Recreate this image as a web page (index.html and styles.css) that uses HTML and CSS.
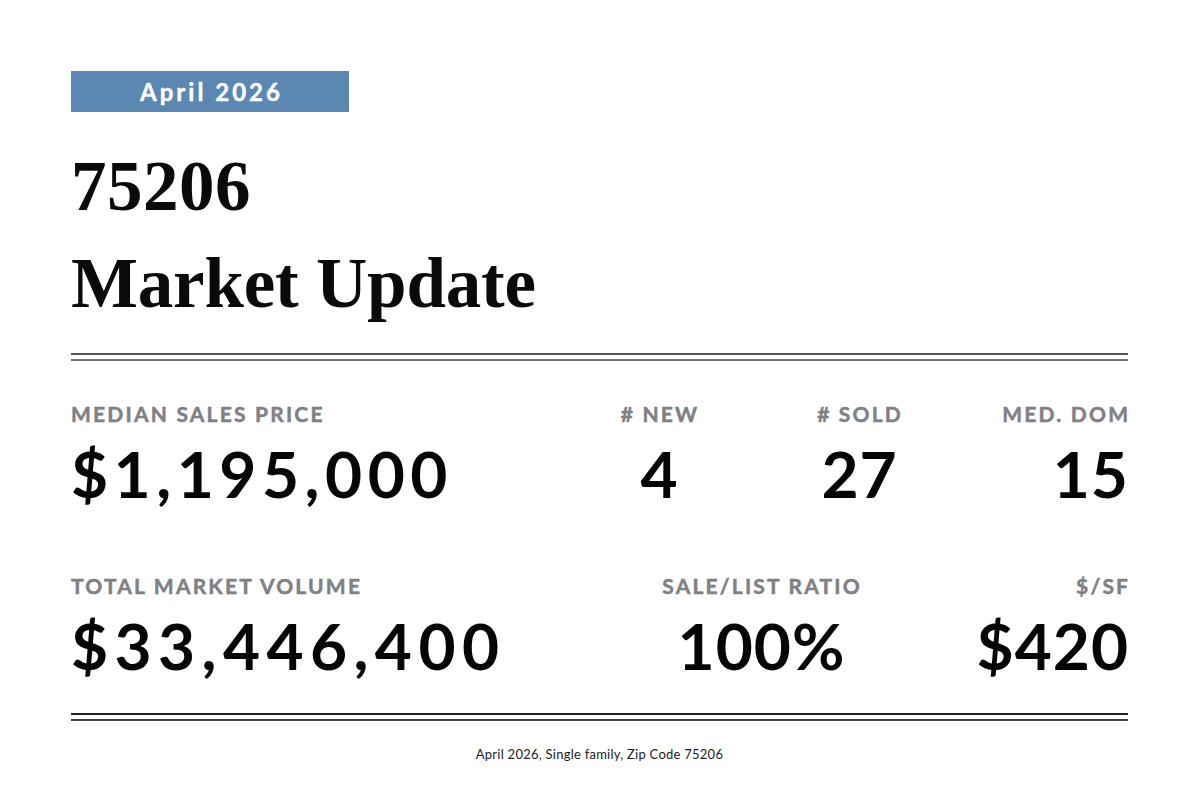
FILE: index.html
```html
<!DOCTYPE html>
<html lang="en">
<head>
<meta charset="utf-8">
<title>75206 Market Update</title>
<link rel="stylesheet" href="styles.css">
</head>
<body>
<main class="page">
  <div class="badge">April 2026</div>
  <h1 class="title"><span class="zip">75206</span><span class="headline">Market Update</span></h1>
  <div class="rule rule-top"></div>
  <section class="stats">
    <div class="row row-one">
      <div class="stat stat-left">
        <div class="label">Median Sales Price</div>
        <div class="value value-long">$1,195,000</div>
      </div>
      <div class="stat stat-center">
        <div class="label"># New</div>
        <div class="value">4</div>
      </div>
      <div class="stat stat-center">
        <div class="label"># Sold</div>
        <div class="value">27</div>
      </div>
      <div class="stat stat-right">
        <div class="label">Med. DOM</div>
        <div class="value">15</div>
      </div>
    </div>
    <div class="row row-two">
      <div class="stat stat-left">
        <div class="label">Total Market Volume</div>
        <div class="value value-long value-longer">$33,446,400</div>
      </div>
      <div class="stat stat-center">
        <div class="label">Sale/List Ratio</div>
        <div class="value">100%</div>
      </div>
      <div class="stat stat-right">
        <div class="label">$/SF</div>
        <div class="value">$420</div>
      </div>
    </div>
  </section>
  <div class="rule rule-bottom"></div>
  <footer class="footnote">April 2026, Single family, Zip Code 75206</footer>
</main>
</body>
</html>
```

FILE: styles.css
```css
* { box-sizing: border-box; }
html, body { margin: 0; padding: 0; background: #ffffff; }
body { width: 1200px; height: 800px; overflow: hidden; }

.page {
  padding: 71px 72px 0 71px;
  display: flex;
  flex-direction: column;
}

.badge {
  width: 278px;
  height: 41px;
  background: #5b88b2;
  color: #ffffff;
  font-family: "Lato", "DejaVu Sans", sans-serif;
  font-weight: 700;
  font-size: 24px;
  letter-spacing: 3px;
  -webkit-text-stroke: 0.4px #ffffff;
  display: flex;
  align-items: center;
  justify-content: center;
  padding: 0 0 1px 3px;
}

.title {
  margin: 0;
  padding-top: 26px;
  font-family: "Liberation Serif", "Times New Roman", serif;
  font-weight: 700;
  font-size: 71px;
  line-height: 97px;
  color: #0a0a0a;
  display: flex;
  flex-direction: column;
}
.zip, .headline { display: block; }
.zip { letter-spacing: 0.5px; }
.headline { letter-spacing: -0.2px; }

.rule {
  height: 8px;
  border-top: 2px solid #555555;
  border-bottom: 2px solid #707070;
}
.rule-top { margin-top: 21px; }
.rule-bottom {
  border-top-color: #222222;
  border-bottom-color: #444444;
}

.stats {
  display: flex;
  flex-direction: column;
}
.row { display: grid; }
.row-one {
  grid-template-columns: 488px 200px 200px 1fr;
  padding-top: 40px;
}
.row-two {
  grid-template-columns: 490px 400px 1fr;
  padding-top: 62px;
  padding-bottom: 30px;
}

.stat { display: flex; flex-direction: column; }
.stat-left { align-items: flex-start; }
.stat-center { align-items: center; }
.stat-right { align-items: flex-end; }

.label {
  font-family: "Lato", "DejaVu Sans", sans-serif;
  font-weight: 700;
  font-size: 21px;
  line-height: 26px;
  letter-spacing: 2.2px;
  text-transform: uppercase;
  color: #808085;
  -webkit-text-stroke: 0.5px #808085;
}
.stat-right .label { margin-right: -2.2px; }
.stat-center .label { margin-right: -2.2px; }

.value {
  font-family: "Lato", "DejaVu Sans", sans-serif;
  font-weight: 700;
  font-size: 64px;
  line-height: 74px;
  letter-spacing: 1px;
  color: #050505;
  margin-top: 10px;
}
.value-long { letter-spacing: 5.5px; }
.value-longer { letter-spacing: 6.4px; }
.stat-right .value { margin-right: -1px; }
.stat-center .value { margin-right: -1px; }

.footnote {
  text-align: center;
  font-family: "Lato", "DejaVu Sans", sans-serif;
  font-size: 13px;
  letter-spacing: 0.25px;
  color: #222222;
  padding-top: 25px;
}
```
